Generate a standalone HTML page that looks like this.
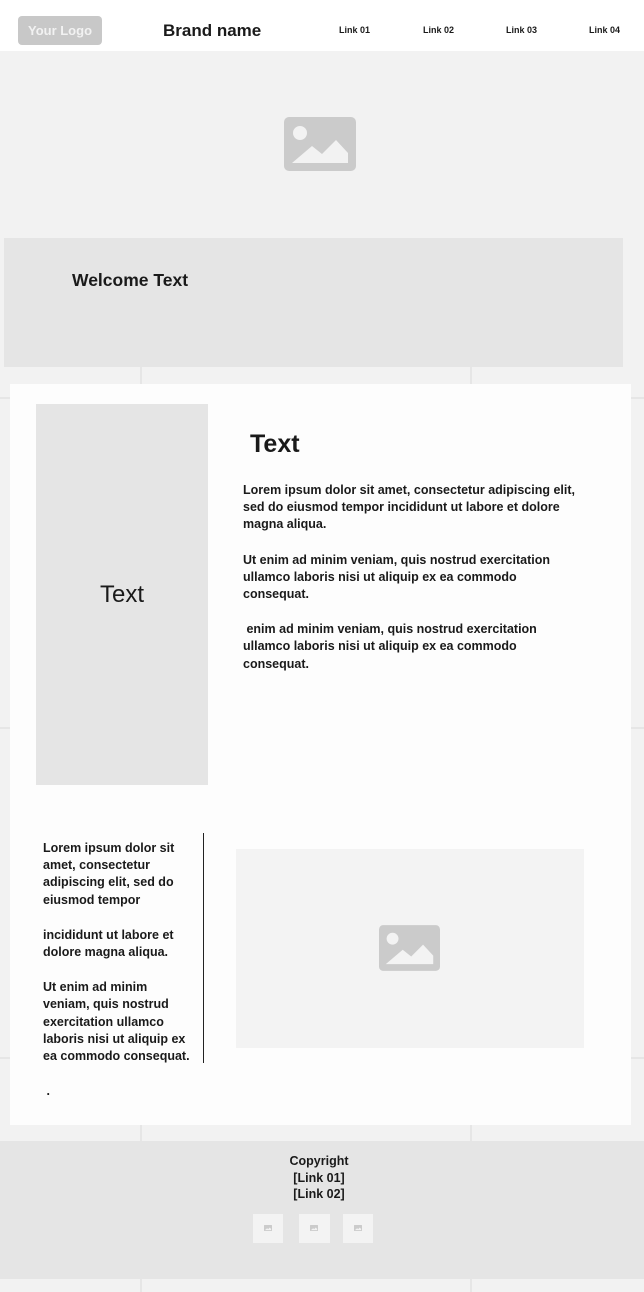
<!DOCTYPE html>
<html><head><meta charset="utf-8"><style>
*{margin:0;padding:0;box-sizing:border-box}
body{width:644px;height:1292px;position:relative;background:#f2f2f2;font-family:"Liberation Sans",sans-serif;color:#1a1a1a;overflow:hidden}
.a{position:absolute}
.vl{position:absolute;top:367px;bottom:0;width:2px;background:#e6e6e6}
.hl{position:absolute;left:0;right:0;height:2px;background:#e6e6e6}
p{font-weight:bold;font-size:12.5px;line-height:17.2px;white-space:nowrap}
</style></head><body>
<div class="vl" style="left:140px"></div><div class="vl" style="left:470px"></div>
<div class="hl" style="top:397px"></div><div class="hl" style="top:727px"></div><div class="hl" style="top:1057px"></div>
<div class="a" style="left:0;top:0;width:644px;height:51px;background:#fff"></div>
<div class="a" style="left:18px;top:16px;width:84px;height:29px;background:#c8c8c8;border-radius:4px;color:#f2f2f2;font-weight:bold;font-size:13px;line-height:29px;text-align:center">Your Logo</div>
<div class="a" style="left:163px;top:21px;font-weight:bold;font-size:17px">Brand name</div>
<div class="a" style="left:339px;top:25px;font-weight:bold;font-size:9px">Link 01</div>
<div class="a" style="left:423px;top:25px;font-weight:bold;font-size:9px">Link 02</div>
<div class="a" style="left:506px;top:25px;font-weight:bold;font-size:9px">Link 03</div>
<div class="a" style="left:589px;top:25px;font-weight:bold;font-size:9px">Link 04</div>
<svg class="a" style="left:284px;top:117px" width="72" height="54" viewBox="0 0 72 54"><rect width="72" height="54" rx="5" fill="#cbcbcb"/><circle cx="16" cy="16" r="7" fill="#f2f2f2"/><path d="M8 46 L28 29 L38 37 L52 23 L64 36 L64 46 Z" fill="#f2f2f2"/></svg>
<div class="a" style="left:4px;top:238px;width:619px;height:129px;background:#e5e5e5"></div>
<div class="a" style="left:72px;top:270px;font-weight:bold;font-size:17.5px">Welcome Text</div>
<div class="a" style="left:10px;top:384px;width:621px;height:741px;background:#fdfdfd"></div>
<div class="a" style="left:36px;top:404px;width:172px;height:381px;background:#e5e5e5;font-size:24px;text-align:center;line-height:381px">Text</div>
<div class="a" style="left:250px;top:430px;font-weight:bold;font-size:25px">Text</div>
<div class="a" style="left:243px;top:482px;width:345px">
<p>Lorem ipsum dolor sit amet, consectetur adipiscing elit,<br>sed do eiusmod tempor incididunt ut labore et dolore<br>magna aliqua.</p><br>
<p>Ut enim ad minim veniam, quis nostrud exercitation<br>ullamco laboris nisi ut aliquip ex ea commodo<br>consequat.</p><br>
<p>&nbsp;enim ad minim veniam, quis nostrud exercitation<br>ullamco laboris nisi ut aliquip ex ea commodo<br>consequat.</p></div>
<div class="a" style="left:43px;top:840px;width:150px">
<p>Lorem ipsum dolor sit<br>amet, consectetur<br>adipiscing elit, sed do<br>eiusmod tempor</p><br>
<p>incididunt ut labore et<br>dolore magna aliqua.</p><br>
<p>Ut enim ad minim<br>veniam, quis nostrud<br>exercitation ullamco<br>laboris nisi ut aliquip ex<br>ea commodo consequat.</p><br>
<p>&nbsp;.</p></div>
<div class="a" style="left:203px;top:833px;width:1px;height:230px;background:#222"></div>
<div class="a" style="left:236px;top:849px;width:348px;height:199px;background:#f3f3f3"></div>
<svg class="a" style="left:379px;top:925px" width="61" height="46" viewBox="0 0 72 54"><rect width="72" height="54" rx="5" fill="#cbcbcb"/><circle cx="16" cy="16" r="7" fill="#f3f3f3"/><path d="M8 46 L28 29 L38 37 L52 23 L64 36 L64 46 Z" fill="#f3f3f3"/></svg>
<div class="a" style="left:0;top:1141px;width:644px;height:138px;background:#e5e5e5"></div>
<div class="a" style="left:0;top:1153px;width:638px;text-align:center;font-weight:bold;font-size:12.5px;line-height:16.5px">Copyright<br>[Link 01]<br>[Link 02]</div>
<div class="a" style="left:253px;top:1214px;width:30px;height:29px;background:#f3f3f3"><svg style="position:absolute;left:11px;top:11px" width="8" height="6" viewBox="0 0 72 54"><rect width="72" height="54" rx="5" fill="#cbcbcb"/><path d="M8 46 L28 29 L38 37 L52 23 L64 36 L64 46 Z" fill="#f3f3f3"/></svg></div>
<div class="a" style="left:299px;top:1214px;width:31px;height:29px;background:#f3f3f3"><svg style="position:absolute;left:11px;top:11px" width="8" height="6" viewBox="0 0 72 54"><rect width="72" height="54" rx="5" fill="#cbcbcb"/><path d="M8 46 L28 29 L38 37 L52 23 L64 36 L64 46 Z" fill="#f3f3f3"/></svg></div>
<div class="a" style="left:343px;top:1214px;width:30px;height:29px;background:#f3f3f3"><svg style="position:absolute;left:11px;top:11px" width="8" height="6" viewBox="0 0 72 54"><rect width="72" height="54" rx="5" fill="#cbcbcb"/><path d="M8 46 L28 29 L38 37 L52 23 L64 36 L64 46 Z" fill="#f3f3f3"/></svg></div>
</body></html>
